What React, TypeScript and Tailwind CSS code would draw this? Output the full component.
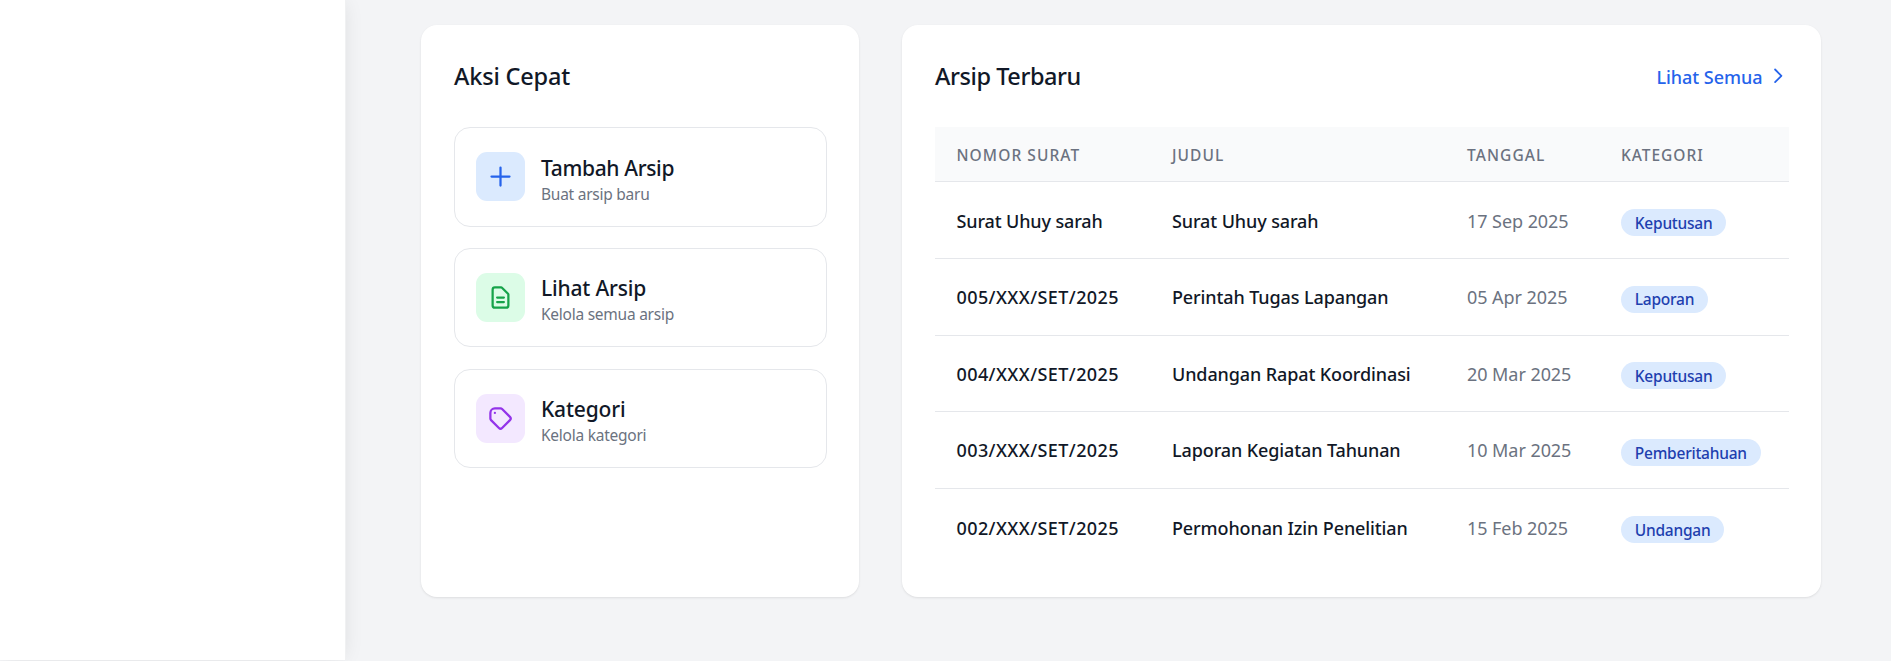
import type { ReactNode } from 'react';

type Action = {
  title: string;
  titleClass: string;
  note: string;
  tile: string;
  path: string;
};

const actions: Action[] = [
  {
    title: 'Tambah Arsip',
    titleClass: 'tracking-[-0.34px]',
    note: 'Buat arsip baru',
    tile: 'bg-[#dbeafe] text-[#2563eb]',
    path: 'M12 4v16m8-8H4',
  },
  {
    title: 'Lihat Arsip',
    titleClass: 'tracking-[-0.18px]',
    note: 'Kelola semua arsip',
    tile: 'bg-[#dcfce7] text-[#16a34a]',
    path: 'M9 12h6m-6 4h6m2 5H7a2 2 0 01-2-2V5a2 2 0 012-2h5.586a1 1 0 01.707.293l5.414 5.414a1 1 0 01.293.707V19a2 2 0 01-2 2z',
  },
  {
    title: 'Kategori',
    titleClass: 'tracking-[-0.16px]',
    note: 'Kelola kategori',
    tile: 'bg-[#f3e8ff] text-[#9333ea]',
    path: 'M7 7h.01M7 3h5c.512 0 1.024.195 1.414.586l7 7a2 2 0 010 2.828l-7 7a2 2 0 01-2.828 0l-7-7A1.994 1.994 0 013 12V7a4 4 0 014-4z',
  },
];

const archives = [
  { number: 'Surat Uhuy sarah', title: 'Surat Uhuy sarah', date: '17 Sep 2025', category: 'Keputusan' },
  { number: '005/XXX/SET/2025', title: 'Perintah Tugas Lapangan', date: '05 Apr 2025', category: 'Laporan' },
  { number: '004/XXX/SET/2025', title: 'Undangan Rapat Koordinasi', date: '20 Mar 2025', category: 'Keputusan' },
  { number: '003/XXX/SET/2025', title: 'Laporan Kegiatan Tahunan', date: '10 Mar 2025', category: 'Pemberitahuan' },
  { number: '002/XXX/SET/2025', title: 'Permohonan Izin Penelitian', date: '15 Feb 2025', category: 'Undangan' },
];

function Icon({ path, className }: { path: string; className: string }) {
  return (
    <svg
      className={className}
      fill="none"
      stroke="currentColor"
      strokeWidth={2}
      strokeLinecap="round"
      strokeLinejoin="round"
      viewBox="0 0 24 24"
    >
      <path d={path} />
    </svg>
  );
}

function Card({ className, children }: { className: string; children: ReactNode }) {
  return (
    <section
      className={`h-[572px] shrink-0 rounded-2xl bg-white px-[33px] pt-[32px] shadow-[0_1px_3px_rgba(0,0,0,0.06),0_1px_2px_rgba(0,0,0,0.04)] ${className}`}
    >
      {children}
    </section>
  );
}

export default function App() {
  return (
    <div className="flex h-[661px] overflow-hidden bg-[#f3f4f6] font-['Noto_Sans','Open_Sans',sans-serif] text-[#111827]">
      <aside className="h-[660px] w-[346px] shrink-0 border-r border-[#f0f1f2] bg-white shadow-[0_0_20px_-4px_rgba(0,0,0,0.12)]" />

      <main className="flex items-start gap-[43px] pt-[25px] pl-[75px]">
        <Card className="w-[438px]">
          <h3 className="mb-[32px] flex h-[38px] items-center pt-[2px] text-[23.5px] font-medium tracking-[-0.18px]">Aksi Cepat</h3>
          <div className="flex flex-col gap-[21.4px]">
            {actions.map((action) => (
              <a
                key={action.title}
                className="flex h-[99.5px] w-[373px] items-center rounded-2xl border border-[#e5e7eb] pl-[21px]"
              >
                <span className={`flex size-[49px] shrink-0 items-center justify-center rounded-[11px] ${action.tile}`}>
                  <Icon path={action.path} className="size-[27px]" />
                </span>
                <span className="ml-[16px] flex flex-col pt-[2px]">
                  <span className={`text-[21px] leading-[33px] font-medium ${action.titleClass}`}>{action.title}</span>
                  <span className="text-[15.5px] leading-[19.5px] tracking-[-0.25px] text-[#6b7280]">{action.note}</span>
                </span>
              </a>
            ))}
          </div>
        </Card>

        <Card className="w-[919px]">
          <div className="mb-[32px] flex h-[38px] items-center justify-between">
            <h3 className="pt-[2px] text-[23.5px] font-medium tracking-[-0.43px]">Arsip Terbaru</h3>
            <a className="flex items-center gap-[5px] text-[18px] font-medium text-[#2563eb]">
              <span className="pt-[2px] tracking-[-0.05px]">Lihat Semua</span>
              <Icon path="M9 5l7 7-7 7" className="-mr-[1px] size-[21.6px]" />
            </a>
          </div>

          <div className="w-[854px]">
            <div className="grid h-[55.4px] grid-cols-[215px_295px_154px_190px] items-center border-b border-[#e5e7eb] bg-[#f9fafb] pt-[3px] text-[15.5px] font-medium tracking-[1.08px] text-[#6b7280]">
              <span className="pl-[21.5px]">NOMOR SURAT</span>
              <span className="pl-[22px]">JUDUL</span>
              <span className="pl-[22px]">TANGGAL</span>
              <span className="pl-[22px] tracking-[0.96px]">KATEGORI</span>
            </div>
            {archives.map((row) => (
              <div
                key={row.number}
                className="grid h-[76.6px] grid-cols-[215px_295px_154px_190px] items-center border-b border-[#e5e7eb] text-[18px] font-medium last:border-b-0"
              >
                <span className={row.number.includes('/') ? 'pt-[2px] pl-[21.5px] tracking-[0.41px]' : 'pt-[2px] pl-[21.5px] tracking-[-0.13px]'}>
                  {row.number}
                </span>
                <span className="pt-[2px] pl-[22px] tracking-[-0.11px]">{row.title}</span>
                <span className="pt-[2px] pl-[22px] font-normal tracking-[-0.06px] text-[#6b7280]">{row.date}</span>
                <span className="flex pt-[4.5px] pl-[22px]">
                  <span className="flex h-[27px] items-center rounded-full bg-[#dbeafe] px-[13.8px] pt-[2px] text-[15.5px] font-medium tracking-[-0.24px] text-[#1e40af]">
                    {row.category}
                  </span>
                </span>
              </div>
            ))}
          </div>
        </Card>
      </main>
    </div>
  );
}
